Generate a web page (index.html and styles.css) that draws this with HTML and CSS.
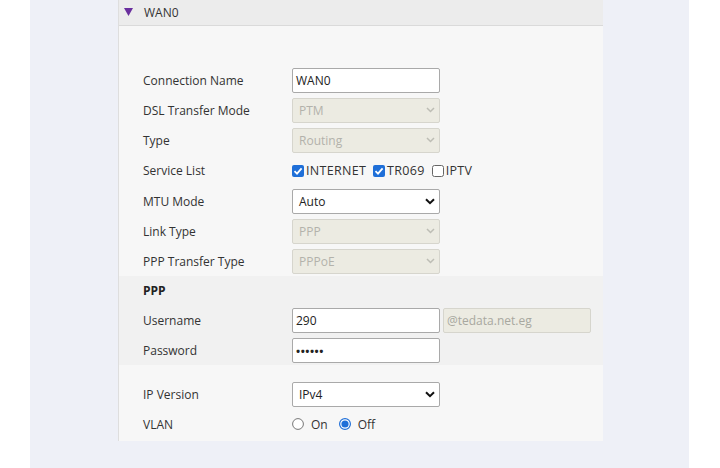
FILE: index.html
```html
<!DOCTYPE html>
<html>
<head>
<meta charset="utf-8">
<link rel="stylesheet" href="styles.css">
</head>
<body>
<div class="wrap">
  <div class="panel">
    <div class="head">
      <svg class="tri" width="9" height="8" viewBox="0 0 9 8"><path d="M0 0H9L4.5 8Z" fill="#6a2f9e"/></svg>
      <span>WAN0</span>
    </div>
    <div class="sec top">
      <div class="row"><div class="lbl">Connection Name</div><div class="field"><div class="inp">WAN0</div></div></div>
      <div class="row"><div class="lbl">DSL Transfer Mode</div><div class="field"><div class="inp dis sel"><span>PTM</span><svg width="9" height="6" viewBox="0 0 9 6"><path d="M1 1L4.5 4.5L8 1" stroke="#bdbdb5" stroke-width="1.5" fill="none"/></svg></div></div></div>
      <div class="row"><div class="lbl">Type</div><div class="field"><div class="inp dis sel"><span>Routing</span><svg width="9" height="6" viewBox="0 0 9 6"><path d="M1 1L4.5 4.5L8 1" stroke="#bdbdb5" stroke-width="1.5" fill="none"/></svg></div></div></div>
      <div class="row svc"><div class="lbl">Service List</div><div class="field checks">
        <span class="cb on"><svg width="12" height="12" viewBox="0 0 12 12"><rect x="0" y="0" width="12" height="12" rx="2" fill="#1f6fd8"/><path d="M2.5 6.2L5 8.6L9.6 3.4" stroke="#fff" stroke-width="1.8" fill="none"/></svg></span><span class="ct">INTERNET</span>
        <span class="cb on"><svg width="12" height="12" viewBox="0 0 12 12"><rect x="0" y="0" width="12" height="12" rx="2" fill="#1f6fd8"/><path d="M2.5 6.2L5 8.6L9.6 3.4" stroke="#fff" stroke-width="1.8" fill="none"/></svg></span><span class="ct">TR069</span>
        <span class="cb"><svg width="12" height="12" viewBox="0 0 12 12"><rect x="0.5" y="0.5" width="11" height="11" rx="2" fill="#fff" stroke="#666"/></svg></span><span class="ct">IPTV</span>
      </div></div>
      <div class="row"><div class="lbl">MTU Mode</div><div class="field"><div class="inp sel"><span>Auto</span><svg width="10" height="7" viewBox="0 0 10 7"><path d="M1 1.2L5 5.2L9 1.2" stroke="#111" stroke-width="2" fill="none"/></svg></div></div></div>
      <div class="row"><div class="lbl">Link Type</div><div class="field"><div class="inp dis sel"><span>PPP</span><svg width="9" height="6" viewBox="0 0 9 6"><path d="M1 1L4.5 4.5L8 1" stroke="#bdbdb5" stroke-width="1.5" fill="none"/></svg></div></div></div>
      <div class="row"><div class="lbl">PPP Transfer Type</div><div class="field"><div class="inp dis sel"><span>PPPoE</span><svg width="9" height="6" viewBox="0 0 9 6"><path d="M1 1L4.5 4.5L8 1" stroke="#bdbdb5" stroke-width="1.5" fill="none"/></svg></div></div></div>
    </div>
    <div class="sec ppp">
      <div class="row title"><div class="lbl b">PPP</div></div>
      <div class="row"><div class="lbl">Username</div><div class="field"><div class="inp">290</div><div class="inp dis suffix">@tedata.net.eg</div></div></div>
      <div class="row"><div class="lbl">Password</div><div class="field"><div class="inp pw">••••••</div></div></div>
    </div>
    <div class="sec bottom">
      <div class="row"><div class="lbl">IP Version</div><div class="field"><div class="inp sel"><span>IPv4</span><svg width="10" height="7" viewBox="0 0 10 7"><path d="M1 1.2L5 5.2L9 1.2" stroke="#111" stroke-width="2" fill="none"/></svg></div></div></div>
      <div class="row"><div class="lbl">VLAN</div><div class="field radios">
        <span class="rd"><svg width="12" height="12" viewBox="0 0 12 12"><circle cx="6" cy="6" r="5.4" fill="#fff" stroke="#777" stroke-width="1"/></svg></span><span class="rt">On</span>
        <span class="rd"><svg width="12" height="12" viewBox="0 0 12 12"><circle cx="6" cy="6" r="5.4" fill="#fff" stroke="#1f6fd8" stroke-width="1.2"/><circle cx="6" cy="6" r="3.6" fill="#1f6fd8"/></svg></span><span class="rt">Off</span>
      </div></div>
    </div>
  </div>
</div>
</body>
</html>
```

FILE: styles.css
```css
html, body {
  margin: 0;
  padding: 0;
  background: #ffffff;
}
body {
  font-family: "Open Sans", "Noto Sans", sans-serif;
  font-size: 12px;
  color: #333;
}
.wrap {
  margin-left: 30px;
  width: 571px;
  height: 468px;
  background: #eef0f7;
  padding-left: 88px;
}
.panel {
  width: 484px;
  background: #f7f7f7;
  border-left: 1px solid #dedede;
}
.head {
  height: 25px;
  background: #ececec;
  border-bottom: 1px solid #dadada;
  display: flex;
  align-items: center;
  padding-left: 5px;
  gap: 11px;
  color: #333;
}
.head .tri {
  margin-top: -1px;
}
.sec {
  padding-left: 24px;
}
.sec.top {
  padding-top: 39px;
}
.sec.ppp {
  background: #f1f1f1;
}
.sec.bottom {
  padding-top: 14px;
  padding-bottom: 2px;
}
.row {
  height: 30px;
  display: flex;
  align-items: center;
}
.row.svc {
  height: 31px;
}
.row.title {
  height: 29px;
}
.lbl {
  width: 149px;
  flex: none;
}
.lbl.b {
  font-weight: 700;
  color: #222;
}
.field {
  display: flex;
  align-items: center;
  gap: 3px;
}
.inp {
  box-sizing: border-box;
  width: 148px;
  height: 25px;
  border: 1px solid #a9a9a9;
  border-radius: 2px;
  background: #fff;
  padding: 0 3px;
  display: flex;
  align-items: center;
  color: #222;
}
.inp.sel {
  justify-content: space-between;
  padding-left: 6px;
  padding-right: 4px;
}
.inp.dis {
  background: #ecebe2;
  border-color: #d6d5cd;
  color: #b3b2ab;
}
.inp.suffix {
  color: #a8a8a0;
}
.inp.pw {
  font-size: 11px;
  letter-spacing: 0.5px;
  color: #222;
  font-weight: 700;
}
.checks, .radios {
  gap: 0;
}
.cb, .rd {
  display: inline-flex;
  width: 12px;
  height: 12px;
}
.ct {
  margin-left: 2px;
  margin-right: 7px;
  color: #333;
  font-size: 12.5px;
  letter-spacing: 0.3px;
}
.rt {
  margin-left: 7px;
  margin-right: 11px;
  color: #333;
}
```
